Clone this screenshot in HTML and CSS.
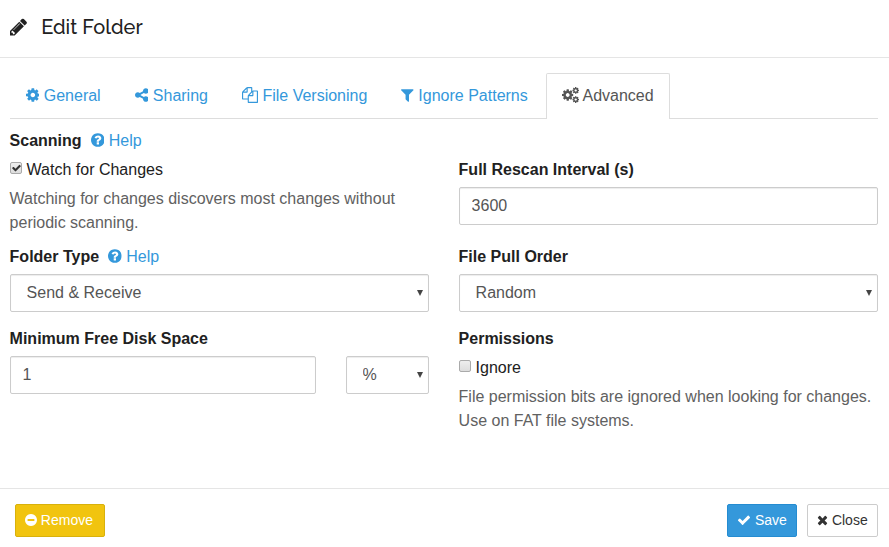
FILE: index.html
```
<!DOCTYPE html>
<html lang="en">
<head>
<meta charset="utf-8">
<title>Edit Folder</title>
<link rel="stylesheet" href="styles.css">
</head>
<body>
<svg class="defs" aria-hidden="true">
  <symbol id="cog" viewBox="128 0 1536 1792"><path d="M1152 896q0-106-75-181t-181-75-181 75-75 181 75 181 181 75 181-75 75-181zm512-109v222q0 12-8 23t-20 13l-185 28q-19 54-39 91 35 50 107 138 10 12 10 25t-9 23q-27 37-99 108t-94 71q-12 0-26-9l-138-108q-44 23-91 38-16 136-29 186-7 28-36 28h-222q-14 0-24.500-8.500t-11.500-21.500l-28-184q-49-16-90-37l-141 107q-10 9-25 9-14 0-25-11-126-114-165-168-7-10-7-23 0-12 8-23 15-21 51-66.500t54-70.500q-27-50-41-99l-183-27q-13-2-21-12.500t-8-23.500v-222q0-12 8-23t19-13l186-28q14-46 39-92-40-57-107-138-10-12-10-24 0-10 9-23 26-36 98.500-107.500t94.500-71.500q13 0 26 10l138 107q44-23 91-38 16-136 29-186 7-28 36-28h222q14 0 24.500 8.500t11.500 21.500l28 184q49 16 90 37l142-107q9-9 24-9 13 0 25 10 129 119 165 170 7 8 7 22 0 12-8 23-15 21-51 66.500t-54 70.500q26 50 41 98l183 28q13 2 21 12.500t8 23.500z"/></symbol>
  <symbol id="question" viewBox="128 0 1536 1792"><path d="M1024 1376v-192q0-14-9-23t-23-9h-192q-14 0-23 9t-9 23v192q0 14 9 23t23 9h192q14 0 23-9t9-23zm256-672q0-88-55.500-163t-138.500-116-170-41q-243 0-371 213-15 24 8 42l132 100q7 6 19 6 16 0 25-12 53-68 86-92 34-24 86-24 48 0 85.500 26t37.500 59q0 38-20 61t-68 45q-63 28-115.500 86.500t-52.500 125.500v36q0 14 9 23t23 9h192q14 0 23-9t9-23q0-19 21.500-49.500t54.500-49.500q32-18 49-28.500t46-35 44.500-48 28-60.500 12.500-81zm384 192q0 209-103 385.500t-279.500 279.500-385.500 103-385.500-103-279.500-279.500-103-385.500 103-385.500 279.500-279.500 385.500-103 385.500 103 279.500 279.500 103 385.500z"/></symbol>
  <symbol id="check" viewBox="0 0 1792 1792"><path d="M1671 566q0 40-28 68l-724 724-136 136q-28 28-68 28t-68-28l-136-136-362-362q-28-28-28-68t28-68l136-136q28-28 68-28t68 28l294 295 656-657q28-28 68-28t68 28l136 136q28 28 28 68z"/></symbol>
</svg>
<header class="header">
  <svg class="header-icon" viewBox="128 0 1536 1792"><path d="M491 1536l91-91-235-235-91 91v107h128v128h107zm523-928q0-22-22-22-10 0-17 7l-542 542q-7 7-7 17 0 22 22 22 10 0 17-7l542-542q7-7 7-17zm-54-192l416 416-832 832h-416v-416zm683 96q0 53-37 90l-166 166-416-416 166-165q36-38 90-38 53 0 91 38l235 234q37 39 37 91z"/></svg>
  <h1 class="title">Edit Folder</h1>
</header>
<main class="body">
  <nav class="tabs">
    <a class="tab"><svg class="icon"><use href="#cog"/></svg> General</a>
    <a class="tab"><svg class="icon" viewBox="128 0 1536 1792"><path d="M1344 1024q133 0 226.500 93.500t93.500 226.500-93.500 226.500-226.500 93.500-226.500-93.500-93.500-226.500q0-12 2-34l-360-180q-92 86-218 86-133 0-226.500-93.500t-93.500-226.500 93.500-226.500 226.500-93.500q126 0 218 86l360-180q-2-22-2-34 0-133 93.500-226.500t226.500-93.500 226.500 93.500 93.500 226.500-93.500 226.500-226.500 93.500q-126 0-218-86l-360 180q2 22 2 34t-2 34l360 180q92-86 218-86z"/></svg> Sharing</a>
    <a class="tab"><svg class="icon icon-files" viewBox="0 0 1792 1792"><path d="M1696 384q40 0 68 28t28 68v1216q0 40-28 68t-68 28h-960q-40 0-68-28t-28-68v-288h-544q-40 0-68-28t-28-68v-672q0-40 20-88t48-76l408-408q28-28 76-48t88-20h416q40 0 68 28t28 68v328q68-40 128-40h416zm-544 213l-299 299h299v-299zm-640-384l-299 299h299v-299zm196 647l316-316v-416h-384v416q0 40-28 68t-68 28h-416v640h512v-256q0-40 20-88t48-76zm956 804v-1152h-384v416q0 40-28 68t-68 28h-416v640h896z"/></svg> File Versioning</a>
    <a class="tab"><svg class="icon icon-filter" viewBox="192 0 1408 1792"><path d="M1595 295q17 41-14 70l-493 493v742q0 42-39 59-13 5-25 5-27 0-45-19l-256-256q-19-19-19-45v-486l-493-493q-31-29-14-70 17-39 59-39h1280q42 0 59 39z"/></svg> Ignore Patterns</a>
    <a class="tab active"><svg class="icon icon-cogs" viewBox="0 0 1920 1792"><use href="#cog" x="0" y="128" width="1280" height="1536"/><use href="#cog" x="1152" y="-64" width="768" height="896"/><use href="#cog" x="1152" y="960" width="768" height="896"/></svg> Advanced</a>
  </nav>
  <form class="form">
    <div class="label">Scanning <a class="help"><svg class="icon"><use href="#question"/></svg> Help</a></div>
    <div class="row row-scan">
      <div>
        <label class="check"><input type="checkbox" class="box" checked><svg class="tick"><use href="#check"/></svg>Watch for Changes</label>
        <p class="hint">Watching for changes discovers most changes without periodic scanning.</p>
      </div>
      <div>
        <div class="label">Full Rescan Interval (s)</div>
        <input class="control" value="3600">
      </div>
    </div>
    <div class="row row-type">
      <div>
        <div class="label">Folder Type <a class="help"><svg class="icon"><use href="#question"/></svg> Help</a></div>
        <div class="select"><select class="control"><option>Send &amp; Receive</option></select></div>
      </div>
      <div>
        <div class="label">File Pull Order</div>
        <div class="select"><select class="control"><option>Random</option></select></div>
      </div>
    </div>
    <div class="row">
      <div>
        <div class="label">Minimum Free Disk Space</div>
        <div class="disk">
          <input class="control" value="1">
          <div class="select"><select class="control"><option>%</option></select></div>
        </div>
      </div>
      <div>
        <div class="label">Permissions</div>
        <label class="check"><input type="checkbox" class="box">Ignore</label>
        <p class="hint">File permission bits are ignored when looking for changes. Use on FAT file systems.</p>
      </div>
    </div>
  </form>
</main>
<footer class="footer">
  <button class="btn warning"><svg class="icon" viewBox="128 0 1536 1792"><path d="M1344 960v-128q0-26-19-45t-45-19h-768q-26 0-45 19t-19 45v128q0 26 19 45t45 19h768q26 0 45-19t19-45zm320-64q0 209-103 385.500t-279.500 279.500-385.500 103-385.500-103-279.500-279.500-103-385.500 103-385.500 279.500-279.500 385.500-103 385.500 103 279.500 279.500 103 385.500z"/></svg> Remove</button>
  <button class="btn primary"><svg class="icon icon-check"><use href="#check"/></svg> Save</button>
  <button class="btn close"><svg class="icon icon-times" viewBox="192 0 1408 1792"><path d="M1490 1322q0 40-28 68l-136 136q-28 28-68 28t-68-28l-294-294-294 294q-28 28-68 28t-68-28l-136-136q-28-28-28-68t28-68l294-294-294-294q-28-28-28-68t28-68l136-136q28-28 68-28t68 28l294 294 294-294q28-28 68-28t68 28l136 136q28 28 28 68t-28 68l-294 294 294 294q28 28 28 68z"/></svg> Close</button>
</footer>
</body>
</html>
```
FILE: styles.css
```
* { box-sizing: border-box; }
body {
  margin: 0;
  height: 547px;
  display: flex;
  flex-direction: column;
  overflow: hidden;
  background: #fff;
  color: #212121;
  font: 16px/24px "Liberation Sans", Arial, sans-serif;
}
.defs { display: none; }
.header {
  height: 58px;
  padding: 0 9.500px 4px;
  display: flex;
  align-items: center;
  border-bottom: 1px solid #e5e5e5;
}
.header-icon { width: 17.14px; height: 20px; fill: #212121; }
.title {
  margin: 0 0 0 14.500px;
  font: 500 20px/24px Raleway, Lato, sans-serif;
}
.icon {
  width: .857em;
  height: 1em;
  vertical-align: -2px;
  fill: currentColor;
}
.icon-files, .icon-check { width: 1em; }
.icon-filter { width: .786em; }
.icon-cogs { width: 1.071em; }
.icon-times { width: .786em; }
.body { flex: 1; padding: 15px 11.400px 0 9.600px; }
.tabs {
  display: flex;
  gap: 2px;
  border-bottom: 1px solid #ddd;
}
.tab {
  height: 45px;
  padding: 10px 15px;
  border: 1px solid transparent;
  border-bottom: 0;
  color: #3498db;
  white-space: nowrap;
}
.tab.active {
  height: 46px;
  margin-bottom: -1px;
  border-color: #ddd;
  border-radius: 2px 2px 0 0;
  background: #fff;
  color: #555;
}
.form { padding-top: 10px; }
.label { height: 24px; margin-bottom: 5px; font-weight: 700; }
.help { margin-left: 4.500px; color: #3498db; font-weight: 400; }
.row {
  display: grid;
  grid-template-columns: 1fr 1fr;
  column-gap: 30px;
}
.row-scan { height: 87px; }
.row-type { height: 82px; }
.check { display: flex; height: 24px; position: relative; }
.box {
  appearance: none;
  flex: none;
  width: 12px;
  height: 12px;
  margin: 4px 5px 0 0;
  border: 1px solid #aaa;
  border-radius: 2px;
  background: linear-gradient(#eee, #ddd);
}
.tick {
  position: absolute;
  left: 1px;
  top: 5px;
  width: 11px;
  height: 10px;
  fill: #333;
}
.hint { margin: 5px 0 0; color: #616161; }
.control {
  display: block;
  appearance: none;
  width: 100%;
  height: 38px;
  margin: 0;
  padding: 6px 12px;
  border: 1px solid #ccc;
  border-radius: 2px;
  background: #fff;
  box-shadow: inset 0 1px 1px rgba(0, 0, 0, .075);
  color: #555;
  font: inherit;
}
.select { position: relative; }
.select .control { padding: 0 16px; }
.select::after {
  content: "";
  position: absolute;
  right: 6px;
  top: 16px;
  border: solid transparent;
  border-width: 6px 3px 0;
  border-top-color: #444;
}
.disk {
  display: grid;
  grid-template-columns: 306px 83px;
  gap: 30px;
}
.footer {
  height: 59px;
  padding: 15px 11px 0 15px;
  display: flex;
  gap: 10px;
  border-top: 1px solid #e5e5e5;
}
.btn {
  height: 33px;
  padding: 0 9px;
  border: 1px solid #ccc;
  border-radius: 2px;
  background: #fff;
  color: #333;
  font: 14px/21px "Liberation Sans", Arial, sans-serif;
  text-align: left;
  white-space: nowrap;
}
.btn.warning {
  width: 90px;
  margin-right: auto;
  border-color: #d8b10c;
  background: #f1c40f;
  color: #fff;
}
.btn.primary {
  width: 70px;
  border-color: #258cd1;
  background: #3498db;
  color: #fff;
}
.btn.close { width: 71px; }
```
